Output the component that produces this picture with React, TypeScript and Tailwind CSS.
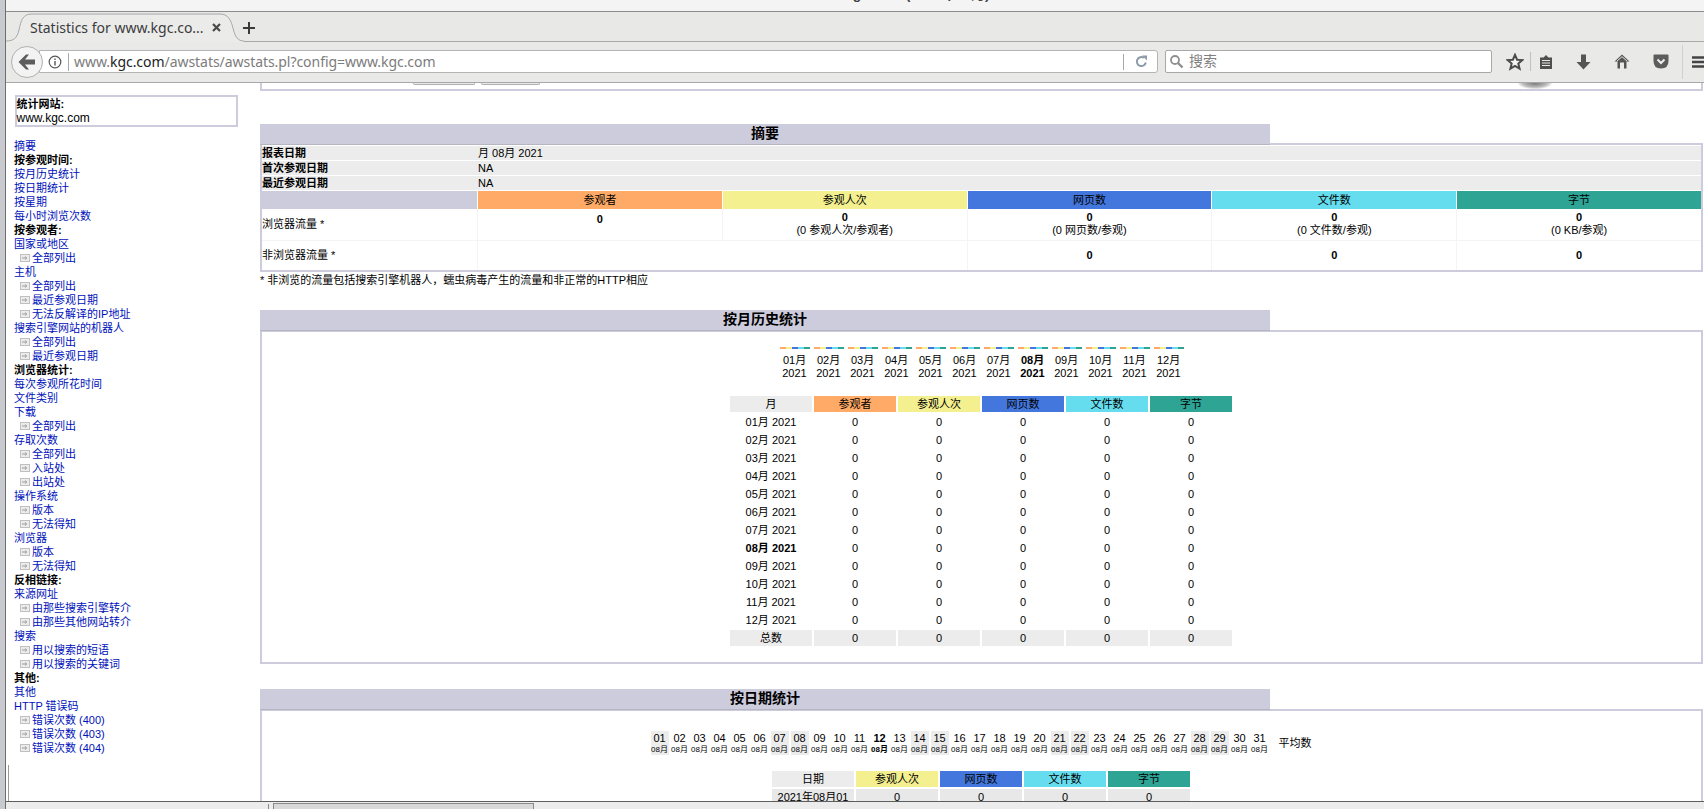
const months = ['01', '02', '03', '04', '05', '06', '07', '08', '09', '10', '11', '12'];
const weekendDays = [1, 7, 8, 14, 15, 21, 22, 28, 29];

type NavRow = { kind: 'head' | 'link' | 'sub'; label: string };

const h = (label: string): NavRow => ({ kind: 'head', label });
const l = (label: string): NavRow => ({ kind: 'link', label });
const s = (label: string): NavRow => ({ kind: 'sub', label });

const navRows: NavRow[] = [
  l('摘要'),
  h('按参观时间:'),
  l('按月历史统计'),
  l('按日期统计'),
  l('按星期'),
  l('每小时浏览次数'),
  h('按参观者:'),
  l('国家或地区'),
  s('全部列出'),
  l('主机'),
  s('全部列出'),
  s('最近参观日期'),
  s('无法反解译的IP地址'),
  l('搜索引擎网站的机器人'),
  s('全部列出'),
  s('最近参观日期'),
  h('浏览器统计:'),
  l('每次参观所花时间'),
  l('文件类别'),
  l('下载'),
  s('全部列出'),
  l('存取次数'),
  s('全部列出'),
  s('入站处'),
  s('出站处'),
  l('操作系统'),
  s('版本'),
  s('无法得知'),
  l('浏览器'),
  s('版本'),
  s('无法得知'),
  h('反相链接:'),
  l('来源网址'),
  s('由那些搜索引擎转介'),
  s('由那些其他网站转介'),
  l('搜索'),
  s('用以搜索的短语'),
  s('用以搜索的关键词'),
  h('其他:'),
  l('其他'),
  l('HTTP 错误码'),
  s('错误次数 (400)'),
  s('错误次数 (403)'),
  s('错误次数 (404)'),
];

const metricHeads = [
  { label: '参观者', bg: 'bg-[#ffaa66]' },
  { label: '参观人次', bg: 'bg-[#f4f090]' },
  { label: '网页数', bg: 'bg-[#4477dd]' },
  { label: '文件数', bg: 'bg-[#66ddee]' },
  { label: '字节', bg: 'bg-[#2ea495]' },
];

const SubIcon = () => (
  <svg width="10" height="8" viewBox="0 0 10 8" className="shrink-0">
    <rect x="0.500" y="0.500" width="9" height="7" fill="#ececec" stroke="#c0c0c0" />
    <path d="M2 4h4M5 2.500 6.800 4 5 5.500" fill="none" stroke="#9a9a9a" />
  </svg>
);

const Sidebar = () => (
  <div className="w-[254px] shrink-0 pl-2 pt-3">
    <div className="ml-[0.5px] w-[223px] h-[32px] border-2 border-[#ccccdd] text-[11px] leading-[14px] text-black">
      <div className="font-bold">统计网站:</div>
      <div className="text-[12px]">www.kgc.com</div>
    </div>
    <div className="mt-3 text-[11px] leading-[14px]">
      {navRows.map((row, i) => {
        if (row.kind === 'head') return <div key={i} className="h-[14px] font-bold text-black">{row.label}</div>;
        if (row.kind === 'link') return <div key={i} className="h-[14px] text-[#0011bb]">{row.label}</div>;
        return (
          <div key={i} className="h-[14px] flex items-center pl-[6px] gap-[2px] text-[#0011bb]">
            <SubIcon />
            <span>{row.label}</span>
          </div>
        );
      })}
    </div>
  </div>
);

const SectionTitle = ({ label }: { label: string }) => (
  <div className="relative z-10 w-[1010px] h-[21px] pb-[2px] bg-[#ccccdd] border-b border-[#b6b6c2] flex items-center justify-center text-[14px] font-bold text-black">
    {label}
  </div>
);

const SummaryTable = () => (
  <div className="-mt-[2px] border-2 border-[#ccccdd] text-[11px] text-black h-[129px]">
    <div className="grid grid-cols-[215px_1fr] gap-y-px pt-px leading-[14px]">
      <div className="h-[14px] bg-[#ececec] font-bold">报表日期</div>
      <div className="h-[14px] bg-[#ececec] pl-px">月 08月 2021</div>
      <div className="h-[14px] bg-[#ececec] font-bold">首次参观日期</div>
      <div className="h-[14px] bg-[#ececec] pl-px">NA</div>
      <div className="h-[14px] bg-[#ececec] font-bold">最近参观日期</div>
      <div className="h-[14px] bg-[#ececec] pl-px">NA</div>
    </div>
    <div className="grid grid-cols-[215px_repeat(5,1fr)] mt-px">
      <div className="h-[18px] bg-[#ccccdd]" />
      {metricHeads.map((m) => (
        <div key={m.label} className={`h-[18px] ${m.bg} border-l border-white flex items-center justify-center`}>
          {m.label}
        </div>
      ))}
      <div className="h-[31px] flex items-center">浏览器流量 *</div>
      <div className="h-[31px] border-l border-[#f4f4f4] text-center leading-[14px] pt-[3px] font-bold">0</div>
      {['(0 参观人次/参观者)', '(0 网页数/参观)', '(0 文件数/参观)', '(0 KB/参观)'].map((sub) => (
        <div key={sub} className="h-[31px] border-l border-[#f4f4f4] text-center leading-[13px] pt-[2px]">
          <div className="font-bold">0</div>
          <div>{sub}</div>
        </div>
      ))}
      <div className="h-[30px] border-t border-[#f4f4f4] flex items-center">非浏览器流量 *</div>
      <div className="col-span-2 h-[30px] border-t border-l border-[#f4f4f4]" />
      {[0, 1, 2].map((i) => (
        <div key={i} className="h-[30px] border-t border-l border-[#f4f4f4] flex items-center justify-center font-bold">0</div>
      ))}
    </div>
  </div>
);

const MonthChart = () => (
  <div className="flex justify-center pt-[15px]">
    {months.map((m) => (
      <div key={m} className={`w-[34px] flex flex-col items-center leading-[13px] ${m === '08' ? 'font-bold' : ''}`}>
        <div className="w-[30px] h-[2px] flex mb-[5px]">
          <span className="flex-1 bg-[#ffaa66]" />
          <span className="flex-1 bg-[#f4f090]" />
          <span className="flex-1 bg-[#4477dd]" />
          <span className="flex-1 bg-[#66ddee]" />
          <span className="flex-1 bg-[#2ea495]" />
        </div>
        <div>{m}月</div>
        <div>2021</div>
      </div>
    ))}
  </div>
);

const MonthTable = () => (
  <div className="mx-auto mt-[16px] w-[503px] grid grid-cols-[repeat(6,82px)] gap-x-[2px]">
    <div className="h-[16px] mb-[1px] bg-[#ececec] flex items-center justify-center">月</div>
    {metricHeads.map((m) => (
      <div key={m.label} className={`h-[16px] mb-[1px] ${m.bg} flex items-center justify-center`}>{m.label}</div>
    ))}
    {months.map((m) => (
      <div key={m} className="contents">
        <div className={`h-[18px] flex items-center justify-center ${m === '08' ? 'font-bold' : ''}`}>{m}月 2021</div>
        {[0, 1, 2, 3, 4].map((i) => (
          <div key={i} className="h-[18px] flex items-center justify-center">0</div>
        ))}
      </div>
    ))}
    <div className="h-[16px] mt-[1px] bg-[#ececec] flex items-center justify-center">总数</div>
    {[0, 1, 2, 3, 4].map((i) => (
      <div key={i} className="h-[16px] mt-[1px] bg-[#ececec] flex items-center justify-center">0</div>
    ))}
  </div>
);

const DayChart = () => (
  <div className="flex justify-center pt-[20px]">
    <div className="flex gap-[2px]">
      {Array.from({ length: 31 }, (_, i) => i + 1).map((d) => (
        <div
          key={d}
          className={`w-[18px] h-[24px] flex flex-col items-center ${weekendDays.includes(d) ? 'bg-[#ececec]' : ''} ${d === 12 ? 'font-bold' : ''}`}
        >
          <div className="leading-[14px]">{String(d).padStart(2, '0')}</div>
          <div className="text-[8px] leading-[10px] whitespace-nowrap">08月</div>
        </div>
      ))}
    </div>
    <div className="ml-[10px] w-[34px] h-[24px] flex items-center whitespace-nowrap">平均数</div>
  </div>
);

const DayTable = () => (
  <div className="mx-auto mt-[16px] w-[419px] grid grid-cols-[repeat(5,82px)] gap-[2px]">
    <div className="h-[16px] bg-[#ececec] flex items-center justify-center">日期</div>
    {metricHeads.slice(1).map((m) => (
      <div key={m.label} className={`h-[16px] ${m.bg} flex items-center justify-center`}>{m.label}</div>
    ))}
    <div className="h-[16px] bg-[#e8e8e8] flex items-center justify-center whitespace-nowrap">2021年08月01</div>
    {[0, 1, 2, 3].map((i) => (
      <div key={i} className="h-[16px] bg-[#e8e8e8] flex items-center justify-center">0</div>
    ))}
  </div>
);

const Main = () => (
  <div className="flex-1 min-w-0 h-full overflow-hidden pr-px text-[11px] text-black">
    {/* bottom of the box scrolled out of view */}
    <div className="h-[8px] border-x-2 border-b-2 border-[#ccccdd] flex items-start">
      <div className="ml-[151px] w-[62px] h-[2px] bg-[#e9e9e9] border-x border-b border-[#b0b0b0] rounded-b-sm" />
      <div className="ml-[6px] w-[59px] h-[2px] bg-[#e9e9e9] border-x border-b border-[#b0b0b0] rounded-b-sm" />
      <div className="ml-[978px] w-[34px] h-[6px] rounded-b-full bg-[radial-gradient(ellipse_at_top,#777777_0%,#bbbbbb_50%,#ffffff_75%)]" />
    </div>

    <div className="mt-[33px]">
      <SectionTitle label="摘要" />
      <SummaryTable />
      <div className="mt-[1px] h-[14px] leading-[14px]">* 非浏览的流量包括搜索引擎机器人，蠕虫病毒产生的流量和非正常的HTTP相应</div>
    </div>

    <div className="mt-[23px]">
      <SectionTitle label="按月历史统计" />
      <div className="-mt-[1px] h-[334px] border-2 border-[#ccccdd]">
        <MonthChart />
        <MonthTable />
      </div>
    </div>

    <div className="mt-[25px]">
      <SectionTitle label="按日期统计" />
      <div className="-mt-[1px] h-[200px] border-2 border-[#ccccdd]">
        <DayChart />
        <DayTable />
      </div>
    </div>
  </div>
);

const TabStrip = () => (
  <div className="relative h-[30px] shrink-0 bg-[#e8e8e7] border-b border-[#a8a8a8] flex items-center pt-[2px]">
    <svg width="240" height="30" viewBox="0 0 240 30" className="absolute left-0 top-0">
      <path d="M0 29C8 29 11 26 13 18 15 8 17 2 26 2H214C222 2 225 8 227 16 229 25 232 29 238 29V30H0Z" fill="#ebebea" />
      <path d="M0 29C8 29 11 26 13 18 15 8 17 2 26 2H214C222 2 225 8 227 16 229 25 232 29 238 29" fill="none" stroke="#a8a8a8" />
    </svg>
    <span className="relative ml-[24px] w-[176px] text-[14px] text-[#3c3c3c] font-['Noto_Sans',sans-serif] whitespace-nowrap overflow-hidden">
      Statistics for www.kgc.co...
    </span>
    <svg width="9" height="9" viewBox="0 0 9 9" className="relative ml-[6px]">
      <path d="M1 1 8 8M8 1 1 8" stroke="#4a4a4a" strokeWidth="2.200" />
    </svg>
    <svg width="14" height="14" viewBox="0 0 14 14" className="relative ml-[21px]">
      <path d="M7 1V13M1 7H13" stroke="#3a3a3a" strokeWidth="2" />
    </svg>
  </div>
);

const NavBar = () => (
  <div className="h-[41px] shrink-0 bg-[#e9e9e8] border-b border-[#a8a8a8] flex items-center pb-px relative overflow-hidden">
    <div className="relative z-10 ml-[5px] w-[32px] h-[32px] rounded-full bg-[#f3f3f3] border border-[#b0b0b0] flex items-center justify-center shrink-0">
      <svg width="18" height="16" viewBox="0 0 18 16">
        <path d="M0.500 8 8 0.500H11L7 5.500H17V10.500H7L11 15.500H8Z" fill="#5c5c5c" />
      </svg>
    </div>
    <div className="-ml-[4px] w-[1119px] h-[23px] bg-white border border-[#b4b4b4] rounded-r-[3px] flex items-center text-[14px] font-['Noto_Sans',sans-serif] text-[#7c7c7c]">
      <svg width="14" height="14" viewBox="0 0 14 14" className="ml-[8px] shrink-0">
        <circle cx="7" cy="7" r="5.800" fill="none" stroke="#555" strokeWidth="1.200" />
        <path d="M7 6V10.500M7 3.500V5" stroke="#555" strokeWidth="1.400" />
      </svg>
      <span className="ml-[6px] w-px h-[18px] bg-[#a8a8a8] shrink-0" />
      <span className="ml-[5px] whitespace-nowrap tracking-[-0.05px]">
        www.<span className="text-[#222]">kgc.com</span>/awstats/awstats.pl?config=www.kgc.com
      </span>
      <span className="ml-auto w-px h-[16px] bg-[#a8a8a8] shrink-0" />
      <svg width="13" height="13" viewBox="0 0 13 13" className="ml-[11px] mr-[9px] shrink-0">
        <path d="M10.800 7.500A4.500 4.500 0 1 1 8.800 2.800" fill="none" stroke="#8d9aa8" strokeWidth="2" />
        <path d="M7 0.500H12V5.500Z" fill="#8d9aa8" />
      </svg>
    </div>
    <div className="ml-[7px] w-[327px] h-[23px] bg-white border border-[#a8a8a8] rounded-[2px] flex items-center text-[14px] text-[#808080]">
      <svg width="15" height="15" viewBox="0 0 15 15" className="ml-[3px] shrink-0">
        <circle cx="6" cy="6" r="4" fill="none" stroke="#8f8f8f" strokeWidth="1.800" />
        <path d="M9 9 13.500 13.500" stroke="#8f8f8f" strokeWidth="2.400" />
      </svg>
      <span className="ml-[5px]">搜索</span>
    </div>
    <svg width="18" height="18" viewBox="0 0 18 18" className="ml-[14px] shrink-0">
      <path d="M9 1.800 11.100 6.700 16.300 7.100 12.300 10.500 13.600 15.700 9 12.900 4.400 15.700 5.700 10.500 1.700 7.100 6.900 6.700Z" fill="#f6f6f6" stroke="#4c4c4c" strokeWidth="2" />
    </svg>
    <span className="ml-[6px] w-px h-[19px] bg-[#c0c0c0] shrink-0" />
    <svg width="14" height="16" viewBox="0 0 14 16" className="ml-[8px] shrink-0">
      <path d="M1 3.500H4.500L7 1 9.500 3.500H13V15H1Z" fill="#4f4f4f" />
      <path d="M3 6.500H11M3 9H11M3 11.500H11" stroke="#e9e9e8" />
    </svg>
    <svg width="15" height="16" viewBox="0 0 15 16" className="ml-[23px] shrink-0">
      <path d="M5 0.500H10V8H14.500L7.500 15.500 0.500 8H5Z" fill="#555" />
    </svg>
    <svg width="16" height="15" viewBox="0 0 16 15" className="ml-[23px] shrink-0">
      <path d="M8 0.500 15.500 7.500H12.500V14.500H10V8.500H6V14.500H3.500V7.500H0.500Z" fill="#555" />
      <path d="M3 7 8 2.700 13 7" fill="none" stroke="#e9e9e8" />
    </svg>
    <svg width="16" height="15" viewBox="0 0 16 15" className="ml-[23px] shrink-0">
      <path d="M1.500 0.500H14.500Q15.500 0.500 15.500 1.500V7Q15.500 14.500 8 14.500 0.500 14.500 0.500 7V1.500Q0.500 0.500 1.500 0.500Z" fill="#5c5c5c" />
      <path d="M4.500 5.500 8 9 11.500 5.500" fill="none" stroke="#eeeeee" strokeWidth="2" />
    </svg>
    <span className="ml-[13px] w-px h-[34px] bg-[#d0d0d0] shrink-0" />
    <svg width="12" height="12" viewBox="0 0 12 12" className="ml-[9px] shrink-0">
      <path d="M0 1.500H12M0 6H12M0 10.500H12" stroke="#444" strokeWidth="2.400" />
    </svg>
  </div>
);

export default function App() {
  return (
    <div className="relative w-[1704px] h-[809px] flex overflow-hidden bg-white font-['Liberation_Sans','Noto_Sans_CJK_SC',sans-serif]">
      <div className="w-[6px] shrink-0 bg-[#c9c9d0] border-r border-[#6e6e6e]" />
      <div className="flex-1 min-w-0 flex flex-col">
        <div className="h-[12px] shrink-0 bg-[#f4f4f4] border-b border-[#8c8c8c] overflow-hidden flex justify-center">
          <div className="-mt-[16px] text-[14px] font-bold text-[#444] whitespace-nowrap">Statistics for www.kgc.com (2021年08月)</div>
        </div>
        <TabStrip />
        <NavBar />
        <div className="h-[718px] shrink-0 flex relative">
          <Sidebar />
          <Main />
          {/* frame edge left at the bottom of the sidebar */}
          <div className="absolute left-[2px] top-[682px] h-[36px] w-px bg-[#9a9a9a]" />
        </div>
        <div className="h-[8px] shrink-0 bg-[#ececec] border-t border-[#5e5e5e] flex items-end">
          <div className="ml-[262px] w-px h-[5px] bg-[#8a8a8a]" />
          <div className="ml-[4px] w-[261px] h-[6px] bg-[#d9d9d9] border-t border-x border-[#8a8a8a]" />
        </div>
      </div>
    </div>
  );
}
